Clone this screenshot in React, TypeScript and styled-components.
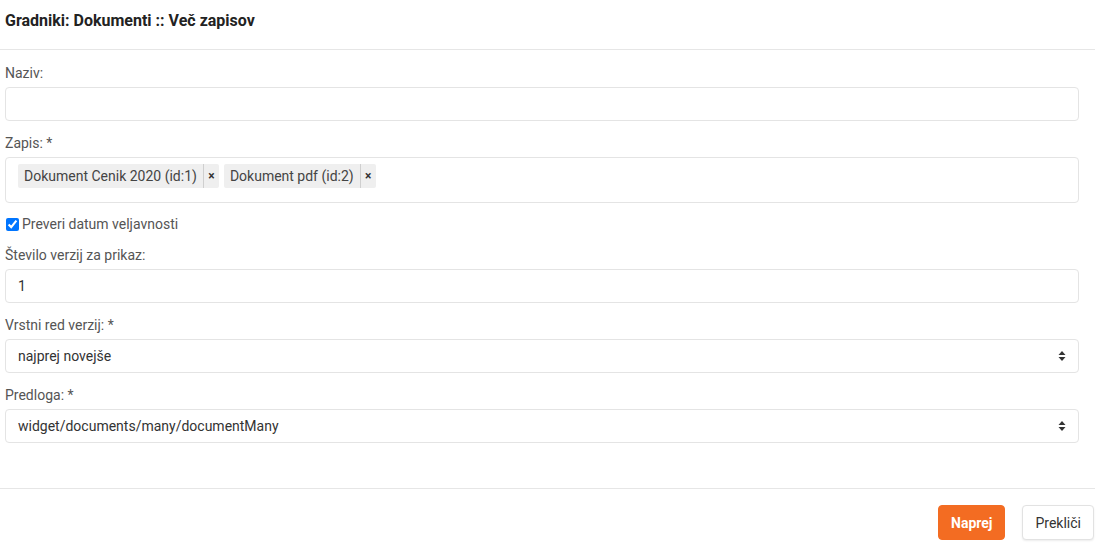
import React, { useState } from 'react'
import styled, { createGlobalStyle } from 'styled-components'

const Global = createGlobalStyle`
  body {
    margin: 0;
    background: #fff;
    font-family: Roboto, "Liberation Sans", Arial, sans-serif;
    color: #333;
  }
`;

const Modal = styled.div`
  width: 1095px;
  display: flex;
  flex-direction: column;
`;

const Header = styled.div`
  height: 50px;
  border-bottom: 1px solid #e6e6e6;
  display: flex;
  align-items: center;
  padding: 0 5px 9px;
  box-sizing: border-box;

  h1 {
    margin: 0;
    font-size: 16px;
    font-weight: 700;
    color: #222;
  }
`;

const Body = styled.form`
  padding: 13px 16px 45px 5px;
  display: flex;
  flex-direction: column;
  gap: 12px;
`;

const Group = styled.div`
  display: flex;
  flex-direction: column;
  gap: 4px;
`;

const Label = styled.label`
  font-size: 14px;
  line-height: 20px;
  color: #555;
`;

const Field = styled.div<{ $tall?: boolean }>`
  height: ${p => (p.$tall ? '46px' : '34px')};
  box-sizing: border-box;
  border: 1px solid #e4e4e4;
  border-radius: 4px;
  background: #fff;
  display: flex;
  align-items: ${p => (p.$tall ? 'flex-start' : 'center')};
  padding: ${p => (p.$tall ? '6px 12px' : '0 12px')};
  font-size: 14px;
  color: #333;
  gap: 5px;
`;

const Input = styled.input`
  border: none;
  outline: none;
  flex: 1;
  font: inherit;
  color: inherit;
  padding: 0;
  background: transparent;
`;

const SelectText = styled.span`
  flex: 1;
`;

const Tag = styled.span`
  display: flex;
  align-items: center;
  height: 24px;
  background: #efefef;
  border-radius: 2px;
  font-size: 14px;
  color: #444;

  .text {
    padding: 0 6px;
    border-right: 1px solid #cfcfcf;
    line-height: 24px;
  }

  .x {
    width: 15px;
    text-align: center;
    font-size: 12px;
    font-weight: 700;
    color: #333;
  }
`;

const CheckRow = styled.label`
  display: flex;
  align-items: center;
  height: 18px;
  font-size: 14px;
  color: #555;

  input {
    margin: 0 3px 0 1px;
    width: 13px;
    height: 13px;
  }
`;

const Footer = styled.div`
  border-top: 1px solid #e6e6e6;
  padding: 16px 1px 10px;
  display: flex;
  justify-content: flex-end;
  gap: 17px;
`;

const Button = styled.button<{ $primary?: boolean }>`
  height: 35px;
  padding: 0 12px;
  border-radius: 4px;
  font-family: inherit;
  font-size: 14px;
  cursor: pointer;
  border: 1px solid ${p => (p.$primary ? '#f36c22' : '#e2e2e2')};
  background: ${p => (p.$primary ? '#f36c22' : '#fff')};
  color: ${p => (p.$primary ? '#fff' : '#333')};
  font-weight: ${p => (p.$primary ? 700 : 400)};
  box-shadow: ${p => (p.$primary ? 'none' : '0 1px 2px rgba(0,0,0,0.08)')};
`;

const Arrows = () => (
  <svg width="8" height="12" viewBox="0 0 8 12">
    <path d="M4 1 L7.5 5 L0.5 5 Z" fill="#333" />
    <path d="M4 11 L7.5 7 L0.5 7 Z" fill="#333" />
  </svg>
);

const tags = ['Dokument Cenik 2020 (id:1)', 'Dokument pdf (id:2)'];

export default function App() {
  const [checked, setChecked] = useState(true);

  return (
    <Modal>
      <Global />
      <Header>
        <h1>Gradniki: Dokumenti :: Več zapisov</h1>
      </Header>

      <Body>
        <Group>
          <Label>Naziv:</Label>
          <Field>
            <Input defaultValue="" />
          </Field>
        </Group>

        <Group>
          <Label>Zapis: *</Label>
          <Field $tall>
            {tags.map((t, i) => (
              <Tag key={i}>
                <span className="text">{t}</span>
                <span className="x">×</span>
              </Tag>
            ))}
          </Field>
        </Group>

        <CheckRow>
          <input type="checkbox" checked={checked} onChange={() => setChecked(!checked)} />
          Preveri datum veljavnosti
        </CheckRow>

        <Group>
          <Label>Število verzij za prikaz:</Label>
          <Field>
            <Input defaultValue="1" />
          </Field>
        </Group>

        <Group>
          <Label>Vrstni red verzij: *</Label>
          <Field>
            <SelectText>najprej novejše</SelectText>
            <Arrows />
          </Field>
        </Group>

        <Group>
          <Label>Predloga: *</Label>
          <Field>
            <SelectText>widget/documents/many/documentMany</SelectText>
            <Arrows />
          </Field>
        </Group>
      </Body>

      <Footer>
        <Button $primary type="button">Naprej</Button>
        <Button type="button">Prekliči</Button>
      </Footer>
    </Modal>
  )
}
